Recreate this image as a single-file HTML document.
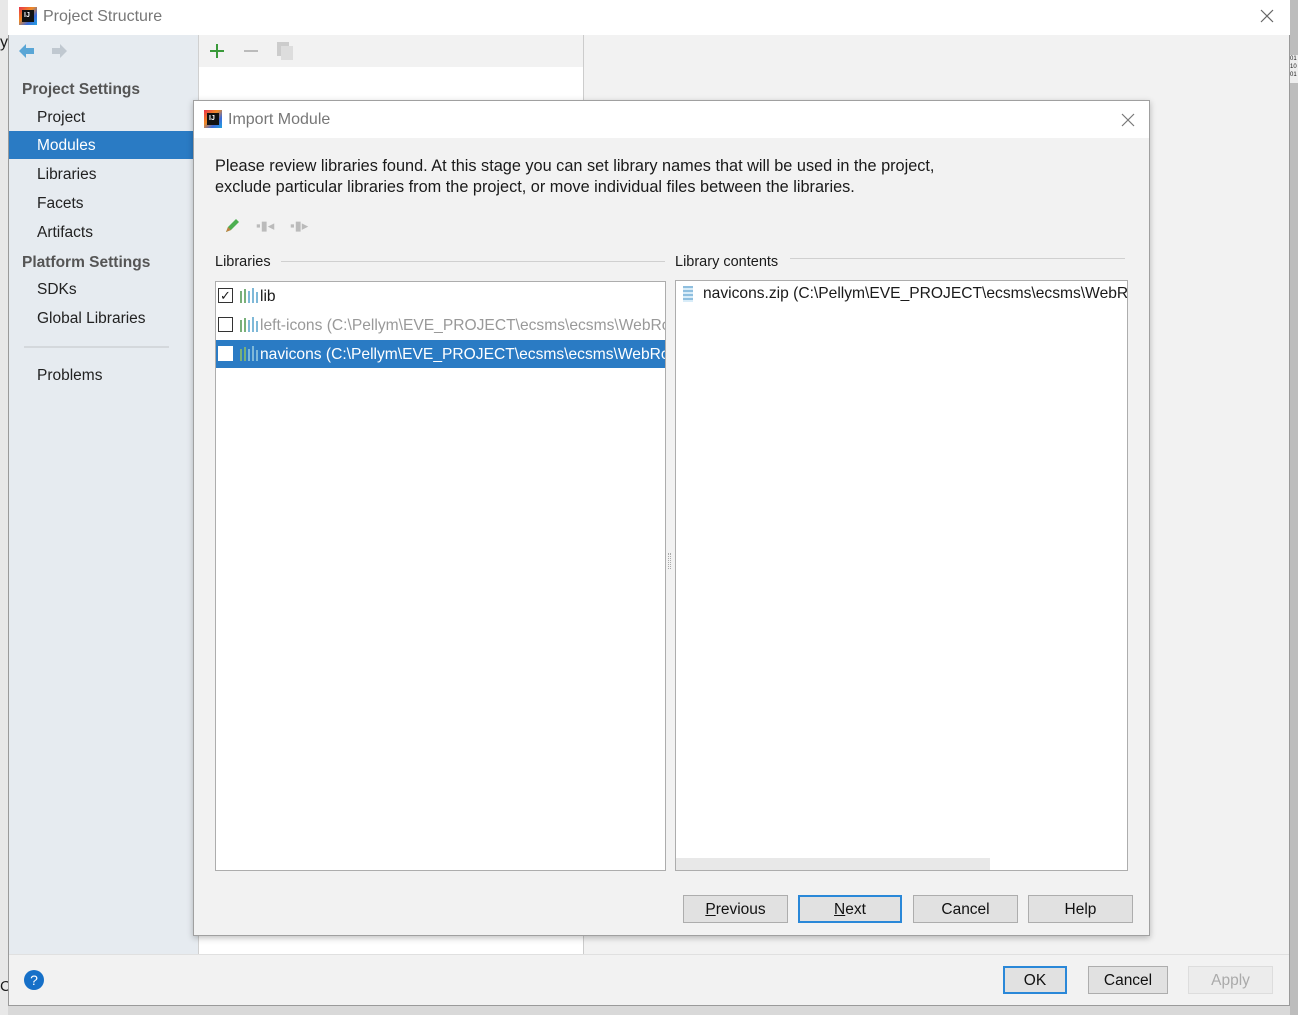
<!DOCTYPE html>
<html><head><meta charset="utf-8"><style>
*{box-sizing:border-box;margin:0;padding:0}
body{width:1298px;height:1015px;position:relative;overflow:hidden;background:#d9d9d9;font-family:"Liberation Sans",sans-serif;font-size:15px;color:#1a1a1a}
.a{position:absolute}
.logo{position:absolute;width:18px;height:18px;background:linear-gradient(135deg,#e8334a,#f08a24 40%,#3c6ad8 70%,#22a3e0);}
.logo:after{content:"";position:absolute;left:3px;top:3px;width:12px;height:12px;background:#111}
.logo i{position:absolute;left:5px;top:5px;color:#fff;font-size:7px;font-style:normal;font-weight:bold;z-index:2;line-height:7px}
.side div{position:absolute;left:28px;font-size:15.5px;color:#222}
.btn{position:absolute;height:28px;border:1px solid #adadad;background:#e1e1e1;text-align:center;line-height:27px;font-size:15.5px;color:#111}
.cb{position:absolute;width:15px;height:15px;border:1px solid #333;background:#fff}
.lt{font-size:15.6px;white-space:nowrap}
</style></head><body>
<div class="a" style="left:0;top:0;width:8px;height:1015px;background:#e8e8e8"></div>
<div class="a" style="left:0;top:34px;font-size:16px">y</div>
<div class="a" style="left:0;top:978px;font-size:15px">C</div>
<div class="a" style="left:1290px;top:0;width:8px;height:1015px;background:#bdbdbd"></div>
<div class="a" style="left:1290px;top:55px;width:8px;height:28px;background:#eee;font-size:6px;line-height:8px">01<br>10<br>01</div>
<div class="a" style="left:8px;top:0;width:1282px;height:1006px;background:#f2f2f2;border:1px solid #9a9a9a;border-top:none"></div>
<div class="a" style="left:8px;top:0;width:1282px;height:35px;background:#fff"></div>
<div class="logo" style="left:19px;top:7px"><i>IJ</i></div>
<div class="a" style="left:43px;top:8px;font-size:16px;color:#777">Project Structure</div>
<svg class="a" style="left:1260px;top:9px" width="14" height="14"><path d="M1 1L13 13M13 1L1 13" stroke="#666" stroke-width="1.2"/></svg>
<div class="a side" style="left:9px;top:35px;width:190px;height:919px;background:#e6ebf0;border-right:1px solid #d0d0d0">
<svg class="a" style="left:8px;top:8px" width="18" height="16"><path d="M9 1L2 8L9 15V11H17V5H9Z" fill="#5aa6d6"/></svg>
<svg class="a" style="left:42px;top:8px" width="18" height="16"><path d="M9 1L16 8L9 15V11H1V5H9Z" fill="#c0c8d0"/></svg>
<div style="left:13px;top:46px;font-weight:bold;color:#555">Project Settings</div>
<div style="top:74px">Project</div>
<div style="left:0;top:96px;width:185px;height:28px;background:#2a7bc4;color:#fff;padding-left:28px;line-height:29px">Modules</div>
<div style="top:131px">Libraries</div>
<div style="top:160px">Facets</div>
<div style="top:189px">Artifacts</div>
<div style="left:13px;top:219px;font-weight:bold;color:#555">Platform Settings</div>
<div style="top:246px">SDKs</div>
<div style="top:275px">Global Libraries</div>
<div style="left:15px;top:311px;width:145px;height:2px;background:#d4d8dc"></div>
<div style="top:332px">Problems</div>
</div>
<div class="a" style="left:199px;top:35px;width:385px;height:32px;background:#f2f2f2;border-right:1px solid #ccc"></div>
<div class="a" style="left:199px;top:67px;width:385px;height:887px;background:#fff;border-right:1px solid #ccc"></div>
<svg class="a" style="left:208px;top:42px" width="18" height="18"><path d="M9 2V16M2 9H16" stroke="#3a9a3a" stroke-width="2"/></svg>
<svg class="a" style="left:242px;top:42px" width="18" height="18"><path d="M2 9H16" stroke="#bbb" stroke-width="2"/></svg>
<div class="a" style="left:277px;top:42px;width:12px;height:14px;background:#ccc"></div>
<div class="a" style="left:281px;top:46px;width:12px;height:14px;background:#ddd"></div>
<div class="a" style="left:9px;top:954px;width:1280px;height:1px;background:#e0e0e0"></div>
<div class="a" style="left:24px;top:970px;width:20px;height:20px;border-radius:50%;background:#1670c8;color:#fff;text-align:center;line-height:20px;font-size:14px">?</div>
<div class="btn" style="left:1003px;top:966px;width:64px;border:2px solid #2a88d8;line-height:25px">OK</div>
<div class="btn" style="left:1088px;top:966px;width:80px">Cancel</div>
<div class="btn" style="left:1188px;top:966px;width:85px;color:#aaa;background:#ececec;border-color:#ddd">Apply</div>
<div class="a" style="left:193px;top:100px;width:957px;height:836px;background:#f2f2f2;border:1px solid #a0a0a0;box-shadow:0 2px 6px rgba(0,0,0,.25)"></div>
<div class="a" style="left:194px;top:101px;width:955px;height:37px;background:#fff"></div>
<div class="logo" style="left:204px;top:110px"><i>IJ</i></div>
<div class="a" style="left:228px;top:111px;font-size:16px;color:#777">Import Module</div>
<svg class="a" style="left:1121px;top:113px" width="14" height="14"><path d="M1 1L13 13M13 1L1 13" stroke="#777" stroke-width="1.2"/></svg>
<div class="a" style="left:215px;top:156px;line-height:21px;font-size:16.3px;white-space:nowrap">Please review libraries found. At this stage you can set library names that will be used in the project,<br>exclude particular libraries from the project, or move individual files between the libraries.</div>
<svg class="a" style="left:223px;top:217px" width="18" height="18"><path d="M3 15L5 10L13 2L16 5L8 13Z" fill="#4caf50"/><path d="M3 15L5 10L8 13Z" fill="#c08040"/></svg>
<div class="a" style="left:256px;top:218px;width:18px;height:15px;color:#bbb;font-size:13px">▪▮◂</div>
<div class="a" style="left:290px;top:218px;width:18px;height:15px;color:#bbb;font-size:13px">▪▮▸</div>
<div class="a" style="left:215px;top:254px;font-size:14.5px">Libraries</div>
<div class="a" style="left:281px;top:261px;width:384px;height:1px;background:#d0d0d0"></div>
<div class="a" style="left:675px;top:254px;font-size:14.5px">Library contents</div>
<div class="a" style="left:790px;top:258px;width:335px;height:1px;background:#d0d0d0"></div>
<div class="a" style="left:215px;top:281px;width:451px;height:590px;background:#fff;border:1px solid #adadad;overflow:hidden">
<div class="cb" style="left:2px;top:6px;font-size:13px;line-height:13px;text-align:center">✓</div>
<div class="a" style="left:24px;top:6px"><svg width="18" height="15"><rect x="0" y="3" width="2" height="12" fill="#79b07a"/><rect x="4" y="1" width="2" height="14" fill="#79b07a"/><rect x="8" y="3" width="2" height="12" fill="#7fb9d8"/><rect x="12" y="0" width="2" height="15" fill="#7fb9d8"/><rect x="16" y="4" width="2" height="11" fill="#7fb9d8"/></svg></div>
<div class="a lt" style="left:44px;top:6px">lib</div>
<div class="cb" style="left:2px;top:35px"></div>
<div class="a" style="left:24px;top:35px"><svg width="18" height="15"><rect x="0" y="3" width="2" height="12" fill="#79b07a"/><rect x="4" y="1" width="2" height="14" fill="#79b07a"/><rect x="8" y="3" width="2" height="12" fill="#7fb9d8"/><rect x="12" y="0" width="2" height="15" fill="#7fb9d8"/><rect x="16" y="4" width="2" height="11" fill="#7fb9d8"/></svg></div>
<div class="a lt" style="left:44px;top:35px;color:#999">left-icons (C:\Pellym\EVE_PROJECT\ecsms\ecsms\WebRoot</div>
<div class="a" style="left:0;top:58px;width:451px;height:28px;background:#2a7bc4"></div>
<div class="cb" style="left:2px;top:64px;border-color:#fff"></div>
<div class="a" style="left:24px;top:64px"><svg width="18" height="15"><rect x="0" y="3" width="2" height="12" fill="#79b07a"/><rect x="4" y="1" width="2" height="14" fill="#79b07a"/><rect x="8" y="3" width="2" height="12" fill="#7fb9d8"/><rect x="12" y="0" width="2" height="15" fill="#7fb9d8"/><rect x="16" y="4" width="2" height="11" fill="#7fb9d8"/></svg></div>
<div class="a lt" style="left:44px;top:64px;color:#fff">navicons (C:\Pellym\EVE_PROJECT\ecsms\ecsms\WebRoot</div>
</div>
<div class="a" style="left:675px;top:280px;width:453px;height:591px;background:#fff;border:1px solid #adadad;overflow:hidden">
<div class="a" style="left:7px;top:5px;width:10px;height:16px;background:repeating-linear-gradient(#8fbfdf 0 2px,#d8ecf8 2px 4px)"></div>
<div class="a lt" style="left:27px;top:4px">navicons.zip (C:\Pellym\EVE_PROJECT\ecsms\ecsms\WebRoot</div>
<div class="a" style="left:0;top:577px;width:314px;height:12px;background:#e8e8e8"></div>
</div>
<div class="a" style="left:668px;top:553px;width:3px;height:16px;border-left:1px dotted #aaa;border-right:1px dotted #aaa"></div>
<div class="btn" style="left:683px;top:895px;width:105px"><u>P</u>revious</div>
<div class="btn" style="left:798px;top:895px;width:104px;border:2px solid #2a88d8;line-height:25px"><u>N</u>ext</div>
<div class="btn" style="left:913px;top:895px;width:105px">Cancel</div>
<div class="btn" style="left:1028px;top:895px;width:105px">Help</div>
</body></html>
